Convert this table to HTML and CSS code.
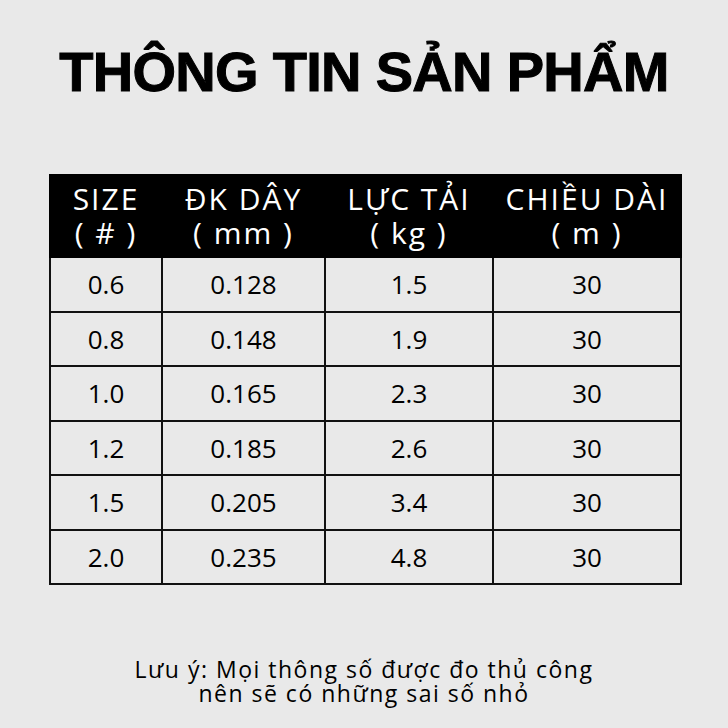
FILE: index.html
```html
<!DOCTYPE html>
<html lang="vi">
<head>
<meta charset="utf-8">
<link rel="stylesheet" href="styles.css">
</head>
<body>
<div class="page">
  <h1 class="title">THÔNG TIN SẢN PHẨM</h1>
  <table class="spec">
    <colgroup>
      <col class="c1"><col class="c2"><col class="c3"><col class="c4">
    </colgroup>
    <thead>
      <tr>
        <th><span class="hl">SIZE</span><span class="hl">( # )</span></th>
        <th><span class="hl">ĐK DÂY</span><span class="hl">( mm )</span></th>
        <th><span class="hl">LỰC TẢI</span><span class="hl">( kg )</span></th>
        <th><span class="hl">CHIỀU DÀI</span><span class="hl">( m )</span></th>
      </tr>
    </thead>
    <tbody>
      <tr><td>0.6</td><td>0.128</td><td>1.5</td><td>30</td></tr>
      <tr><td>0.8</td><td>0.148</td><td>1.9</td><td>30</td></tr>
      <tr><td>1.0</td><td>0.165</td><td>2.3</td><td>30</td></tr>
      <tr><td>1.2</td><td>0.185</td><td>2.6</td><td>30</td></tr>
      <tr><td>1.5</td><td>0.205</td><td>3.4</td><td>30</td></tr>
      <tr><td>2.0</td><td>0.235</td><td>4.8</td><td>30</td></tr>
    </tbody>
  </table>
  <p class="note"><span class="nl">Lưu ý: Mọi thông số được đo thủ công</span><span class="nl">nên sẽ có những sai số nhỏ</span></p>
</div>
</body>
</html>
```

FILE: styles.css
```css
html, body {
  margin: 0;
  padding: 0;
  background: #e9e9e9;
}
.page {
  width: 728px;
  height: 728px;
  display: flex;
  flex-direction: column;
  align-items: center;
  font-family: "Open Sans", "Liberation Sans", sans-serif;
  color: #000;
}
.title {
  margin: 36px 0 0 0;
  font-family: "Liberation Sans", Arial, sans-serif;
  font-weight: 700;
  font-size: 56px;
  line-height: 72px;
  letter-spacing: -0.7px;
  -webkit-text-stroke: 1px #000;
  white-space: nowrap;
}
.spec {
  margin: 66px 0 0 3px;
  border-collapse: collapse;
  table-layout: fixed;
  width: 631px;
}
.c1 { width: 112px; }
.c2 { width: 163px; }
.c3 { width: 168px; }
.c4 { width: 188px; }
.spec th {
  background: #000;
  color: #fff;
  font-weight: 400;
  font-size: 30px;
  height: 80px;
  padding: 0;
  text-align: center;
  border: 2px solid #000;
  letter-spacing: 2px;
  white-space: nowrap;
}
.hl {
  display: block;
  line-height: 34px;
}
.spec td {
  height: 52.5px;
  padding: 0;
  text-align: center;
  font-size: 26px;
  border: 2px solid #111;
}
.note {
  margin: 72px 0 0 0;
  text-align: center;
  font-size: 23px;
  font-weight: 500;
  letter-spacing: 1.5px;
}
.nl {
  display: block;
  line-height: 24px;
}
```
